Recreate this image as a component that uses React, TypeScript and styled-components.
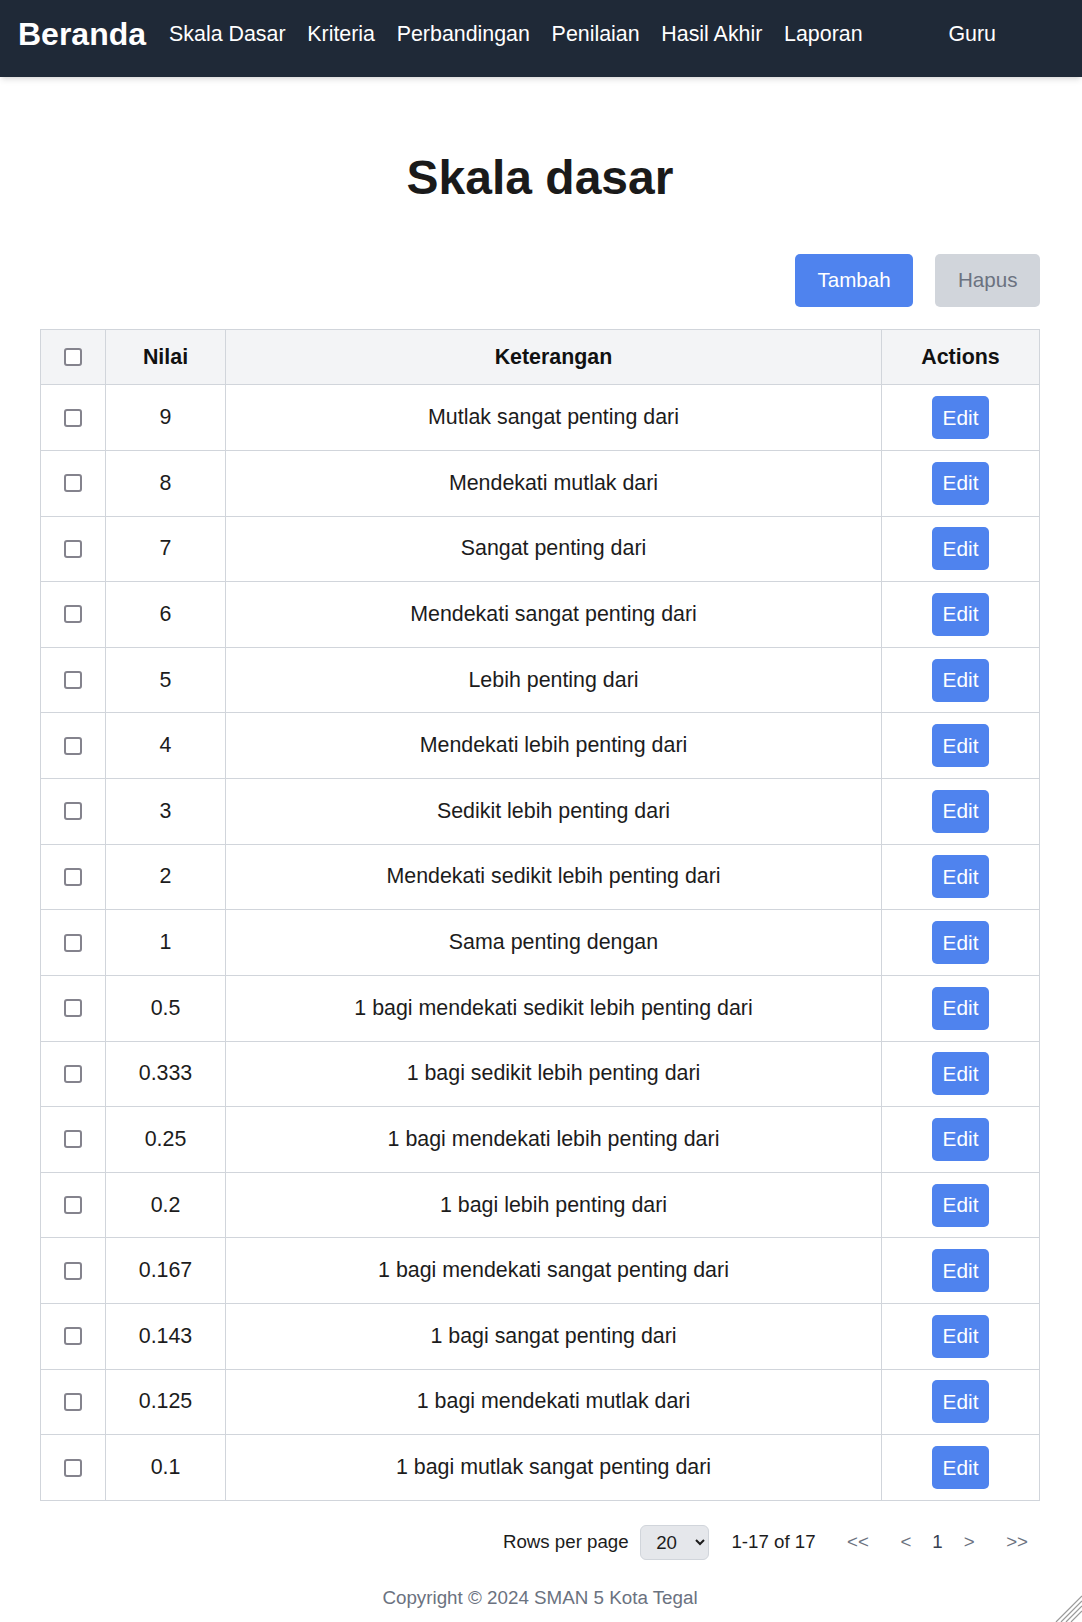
import React from "react";
import styled, { createGlobalStyle } from "styled-components";

const GlobalStyle = createGlobalStyle`
  html, body { margin: 0; padding: 0; background: #ffffff; }
  body {
    font-family: "Liberation Sans", Arial, Helvetica, sans-serif;
    color: #1c1c1c;
  }
  *, *::before, *::after { box-sizing: border-box; }
`;

const NavBar = styled.nav`
  display: flex;
  align-items: center;
  height: 77px;
  padding: 0 86px 8px 18px;
  background: #1f2937;
  box-shadow: 0 4px 6px -1px rgba(0, 0, 0, 0.1), 0 2px 4px -2px rgba(0, 0, 0, 0.1);
`;

const Brand = styled.a`
  font-size: 32px;
  font-weight: 700;
  color: #ffffff;
  text-decoration: none;
  margin-right: 23px;
`;

const NavLinks = styled.div`
  display: flex;
  align-items: center;
  gap: 21.7px;
`;

const NavLink = styled.a`
  font-size: 21.4px;
  color: #ffffff;
  text-decoration: none;
`;

const UserMenu = styled.span`
  margin-left: auto;
  font-size: 21.4px;
  color: #ffffff;
`;

const Main = styled.main`
  padding: 0 42px 0 40px;
`;

const Title = styled.h1`
  margin: 77px 0 0;
  text-align: center;
  font-size: 48px;
  line-height: 48px;
  font-weight: 700;
  color: #1a1a1a;
`;

const Toolbar = styled.div`
  display: flex;
  justify-content: flex-end;
  gap: 22.3px;
  margin-top: 52px;
`;

const ActionButton = styled.button<{ $variant: "primary" | "muted" }>`
  height: 52.7px;
  padding: 0 22.5px;
  border: none;
  border-radius: 5px;
  font-family: inherit;
  font-size: 20.6px;
  background: ${(p) => (p.$variant === "primary" ? "#4f83ee" : "#d1d5db")};
  color: ${(p) => (p.$variant === "primary" ? "#ffffff" : "#6b7280")};
  cursor: ${(p) => (p.$variant === "primary" ? "pointer" : "not-allowed")};
`;

const Table = styled.table`
  width: 999px;
  margin-top: 22.6px;
  border-collapse: collapse;
  table-layout: fixed;
  border: 1px solid #d1d5db;
  font-size: 21.4px;
`;

const HeadCell = styled.th<{ $w: number }>`
  width: ${(p) => p.$w}px;
  padding: 15px 0;
  line-height: 24px;
  background: #f3f4f6;
  border: 1px solid #d1d5db;
  font-weight: 700;
  color: #111111;
  text-align: center;
`;

const Cell = styled.td`
  padding: 10.82px 0;
  border: 1px solid #d1d5db;
  text-align: center;
  vertical-align: middle;
  color: #1c1c1c;
`;

const Check = styled.input.attrs({ type: "checkbox" })`
  appearance: none;
  -webkit-appearance: none;
  display: block;
  width: 18px;
  height: 18px;
  margin: 0 auto;
  border: 2.6px solid #84838d;
  border-radius: 3px;
  background: #ffffff;
`;

const EditButton = styled.button`
  display: block;
  height: 43px;
  margin: 0 auto;
  padding: 0 11px;
  border: none;
  border-radius: 5px;
  background: #4f83ee;
  color: #ffffff;
  font-family: inherit;
  font-size: 20.8px;
  cursor: pointer;
`;

const Pager = styled.div`
  display: flex;
  justify-content: flex-end;
  align-items: center;
  gap: 21px;
  margin-top: 24px;
  padding-right: 1.5px;
  font-size: 18.7px;
  color: #1c1c1c;
`;

const RowsGroup = styled.label`
  display: flex;
  align-items: center;
  gap: 11px;
  margin-right: 1.5px;
`;

const RowsSelect = styled.select`
  width: 69.3px;
  height: 35px;
  padding: 0 4px 0 11.5px;
  border: 1px solid #d1d5db;
  border-radius: 6px;
  background: #e5e7eb;
  color: #1c1c1c;
  font-family: inherit;
  font-size: 18.7px;
`;

const PageButton = styled.button<{ $edge?: boolean; $current?: boolean }>`
  padding: ${(p) => (p.$edge ? "0 10.5px" : "0")};
  border: none;
  background: transparent;
  font-family: inherit;
  font-size: 18.7px;
  color: ${(p) => (p.$current ? "#374151" : "#6b7280")};
  cursor: pointer;
`;

const Footer = styled.footer`
  margin-top: 27px;
  text-align: center;
  font-size: 18.8px;
  color: #6b7280;
  padding-bottom: 16px;
`;

const Grip = styled.svg`
  position: fixed;
  right: 0;
  bottom: 0;
  width: 27px;
  height: 27px;
`;

const rows: [string, string][] = [
  ["9", "Mutlak sangat penting dari"],
  ["8", "Mendekati mutlak dari"],
  ["7", "Sangat penting dari"],
  ["6", "Mendekati sangat penting dari"],
  ["5", "Lebih penting dari"],
  ["4", "Mendekati lebih penting dari"],
  ["3", "Sedikit lebih penting dari"],
  ["2", "Mendekati sedikit lebih penting dari"],
  ["1", "Sama penting dengan"],
  ["0.5", "1 bagi mendekati sedikit lebih penting dari"],
  ["0.333", "1 bagi sedikit lebih penting dari"],
  ["0.25", "1 bagi mendekati lebih penting dari"],
  ["0.2", "1 bagi lebih penting dari"],
  ["0.167", "1 bagi mendekati sangat penting dari"],
  ["0.143", "1 bagi sangat penting dari"],
  ["0.125", "1 bagi mendekati mutlak dari"],
  ["0.1", "1 bagi mutlak sangat penting dari"],
];

const links = ["Skala Dasar", "Kriteria", "Perbandingan", "Penilaian", "Hasil Akhir", "Laporan"];

export default function App() {
  return (
    <>
      <GlobalStyle />
      <NavBar>
        <Brand href="#">Beranda</Brand>
        <NavLinks>
          {links.map((l) => (
            <NavLink key={l} href="#">
              {l}
            </NavLink>
          ))}
        </NavLinks>
        <UserMenu>Guru</UserMenu>
      </NavBar>
      <Main>
        <Title>Skala dasar</Title>
        <Toolbar>
          <ActionButton $variant="primary">Tambah</ActionButton>
          <ActionButton $variant="muted">Hapus</ActionButton>
        </Toolbar>
        <Table>
          <thead>
            <tr>
              <HeadCell $w={65}>
                <Check readOnly />
              </HeadCell>
              <HeadCell $w={120}>Nilai</HeadCell>
              <HeadCell $w={656}>Keterangan</HeadCell>
              <HeadCell $w={158}>Actions</HeadCell>
            </tr>
          </thead>
          <tbody>
            {rows.map(([nilai, ket]) => (
              <tr key={nilai}>
                <Cell>
                  <Check readOnly />
                </Cell>
                <Cell>{nilai}</Cell>
                <Cell>{ket}</Cell>
                <Cell>
                  <EditButton>Edit</EditButton>
                </Cell>
              </tr>
            ))}
          </tbody>
        </Table>
        <Pager>
          <RowsGroup>
            Rows per page
            <RowsSelect defaultValue="20">
              <option value="10">10</option>
              <option value="20">20</option>
              <option value="50">50</option>
            </RowsSelect>
          </RowsGroup>
          <span>1-17 of 17</span>
          <PageButton $edge>&lt;&lt;</PageButton>
          <PageButton>&lt;</PageButton>
          <PageButton $current>1</PageButton>
          <PageButton>&gt;</PageButton>
          <PageButton $edge>&gt;&gt;</PageButton>
        </Pager>
        <Footer>Copyright © 2024 SMAN 5 Kota Tegal</Footer>
      </Main>
      <Grip viewBox="0 0 27 27">
        <g stroke="#9a9a9a" strokeWidth="1.2">
          <line x1="1" y1="27" x2="27" y2="1" />
          <line x1="6" y1="27" x2="27" y2="6" />
          <line x1="11" y1="27" x2="27" y2="11" />
          <line x1="16" y1="27" x2="27" y2="16" />
        </g>
      </Grip>
    </>
  );
}
